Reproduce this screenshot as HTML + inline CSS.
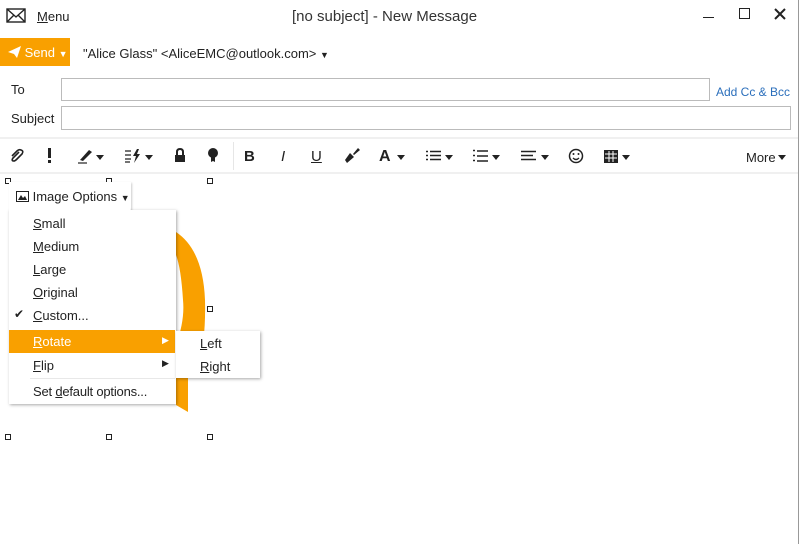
<!DOCTYPE html>
<html><head><style>
*{margin:0;padding:0;box-sizing:border-box}
body{width:800px;height:544px;background:#fff;font-family:"Liberation Sans",sans-serif;color:#222;position:relative;overflow:hidden;font-size:13px}
.a{position:absolute}
.u{text-decoration:underline}
.mi{position:absolute;left:33px;font-size:13px;color:#222}
.h{position:absolute;width:6px;height:6px;border:1px solid #222;background:#fff}
.tb{position:absolute;top:148px;font-size:15px;color:#222}
.ar{position:absolute;top:155px;width:0;height:0;border-left:4px solid transparent;border-right:4px solid transparent;border-top:5px solid #222}
</style></head><body>
<div class="a" style="right:1px;top:0;width:1px;height:544px;background:#999"></div>
<svg class="a" style="left:6px;top:8px" width="20" height="16"><rect x="1" y="1" width="18" height="13" fill="none" stroke="#222" stroke-width="1.4"/><path d="M1 1L10 9L19 1M1 14L8 7M19 14L12 7" fill="none" stroke="#222" stroke-width="1.4"/></svg>
<div class="a" style="left:37px;top:9px;font-size:13px"><span class="u">M</span>enu</div>
<div class="a" style="left:292px;top:8px;font-size:15px;color:#333">[no subject] - New Message</div>
<div class="a" style="left:703px;top:17px;width:11px;height:1px;background:#222"></div>
<div class="a" style="left:739px;top:8px;width:11px;height:11px;border:1.5px solid #222"></div>
<svg class="a" style="left:774px;top:8px" width="12" height="12"><path d="M1 1L11 11M11 1L1 11" stroke="#222" stroke-width="2"/></svg>
<div class="a" style="left:0;top:38px;width:70px;height:28px;background:#f9a000;color:#fff;font-size:13px;padding:7px 0 0 8px">
<svg width="13" height="12" style="vertical-align:-1px"><path d="M0 6L13 0L9 12L6 8Z" fill="#fff"/></svg> Send <span style="font-size:9px">▼</span></div>
<div class="a" style="left:83px;top:46px;font-size:13px">"Alice Glass" &lt;AliceEMC@outlook.com&gt; <span style="font-size:9px">▼</span></div>
<div class="a" style="left:11px;top:82px;font-size:13px">To</div>
<div class="a" style="left:61px;top:78px;width:649px;height:23px;border:1px solid #bbb"></div>
<div class="a" style="left:716px;top:85px;font-size:12px;color:#2a6ebb">Add Cc &amp; Bcc</div>
<div class="a" style="left:11px;top:111px;font-size:13px">Subject</div>
<div class="a" style="left:61px;top:106px;width:730px;height:24px;border:1px solid #bbb"></div>
<div class="a" style="left:0;top:137px;width:798px;height:2px;background:#f0f0f0"></div>
<div class="a" style="left:0;top:172px;width:798px;height:2px;background:#f0f0f0"></div>
<div class="a" style="left:233px;top:142px;width:1px;height:28px;background:#e6e6e6"></div>
<svg class="a" style="left:9px;top:148px" width="16" height="16"><path d="M10 4L4 10Q2 13 5 13Q6 13 8 11L13 6Q15 3 12 2Q10 1 8 3L3 8" fill="none" stroke="#222" stroke-width="1.6"/></svg>
<div class="a" style="left:48px;top:148px;width:3px;height:10px;background:#222"></div>
<div class="a" style="left:48px;top:160px;width:3px;height:3px;background:#222"></div>
<svg class="a" style="left:77px;top:147px" width="18" height="18"><path d="M3 13L12 3L15 5L6 14Z" fill="#222"/><path d="M1 16H10" stroke="#222" stroke-width="1.2"/></svg>
<div class="ar" style="left:96px"></div>
<svg class="a" style="left:124px;top:148px" width="18" height="16"><path d="M1 3H7M1 7H7M1 11H7M1 14H6" stroke="#222" stroke-width="1.3"/><path d="M13 1L9 8H12L10 15L16 6H13L15 1Z" fill="#222"/></svg>
<div class="ar" style="left:145px"></div>
<svg class="a" style="left:174px;top:148px" width="12" height="15"><path d="M3 7V4Q3 1 6 1Q9 1 9 4V7" fill="none" stroke="#222" stroke-width="2"/><rect x="1" y="7" width="10" height="7" fill="#222"/></svg>
<svg class="a" style="left:207px;top:148px" width="12" height="16"><circle cx="6" cy="5" r="5" fill="#222"/><path d="M4 9H8V14L6 13L4 14Z" fill="#222"/></svg>
<div class="tb" style="left:244px;font-weight:bold">B</div>
<div class="tb" style="left:281px;font-style:italic">I</div>
<div class="tb" style="left:311px;text-decoration:underline">U</div>
<svg class="a" style="left:343px;top:147px" width="17" height="17"><path d="M10 7L15 1L17 3L11 8Z" fill="#222"/><path d="M2 13L7 6L11 10L4 16Z" fill="#222"/></svg>
<div class="tb" style="left:379px;font-weight:bold;font-size:16px">A</div>
<div class="ar" style="left:397px"></div>
<svg class="a" style="left:426px;top:150px" width="16" height="12"><path d="M0 1.5H2M4 1.5H15M0 5.5H2M4 5.5H15M0 9.5H2M4 9.5H15" stroke="#222" stroke-width="1.6"/></svg>
<div class="ar" style="left:445px"></div>
<svg class="a" style="left:473px;top:149px" width="16" height="14"><path d="M0 1.5H2M4 2H15M0 6.5H2M4 7H15M0 11.5H2M4 12H15" stroke="#222" stroke-width="1.6"/></svg>
<div class="ar" style="left:492px"></div>
<svg class="a" style="left:521px;top:150px" width="16" height="12"><path d="M0 1.5H15M0 5.5H12M0 9.5H15" stroke="#222" stroke-width="1.6"/></svg>
<div class="ar" style="left:541px"></div>
<svg class="a" style="left:568px;top:148px" width="16" height="16"><circle cx="8" cy="8" r="6.5" fill="none" stroke="#222" stroke-width="1.5"/><circle cx="5.5" cy="6" r="1" fill="#222"/><circle cx="10.5" cy="6" r="1" fill="#222"/><path d="M5 10Q8 13 11 10" fill="none" stroke="#222" stroke-width="1.3"/></svg>
<svg class="a" style="left:604px;top:150px" width="14" height="13"><rect x="0" y="0" width="14" height="13" fill="#222"/><path d="M1 4H13M1 8H13M5 1V12M9 1V12" stroke="#fff" stroke-width="1"/></svg>
<div class="ar" style="left:622px"></div>
<div class="a" style="left:746px;top:150px;font-size:13px">More</div>
<div class="ar" style="left:778px;top:155px"></div>
<svg class="a" style="left:0;top:0" width="800" height="544"><path d="M176 232Q203 250 205 300Q206 340 198 370L176 370L176 345Q185 320 183 300Q181 268 176 255Z" fill="#f9a000"/><path d="M176 378L188 378L188 412L176 405Z" fill="#f9a000"/></svg>
<div class="h" style="left:5px;top:178px"></div><div class="h" style="left:106px;top:178px"></div><div class="h" style="left:207px;top:178px"></div>
<div class="h" style="left:207px;top:306px"></div>
<div class="h" style="left:5px;top:434px"></div><div class="h" style="left:106px;top:434px"></div><div class="h" style="left:207px;top:434px"></div>
<div class="a" style="left:9px;top:182px;width:122px;height:30px;background:#fff;box-shadow:1px 1px 2px rgba(0,0,0,.2)"></div>
<div class="a" style="left:9px;top:210px;width:167px;height:194px;background:#fff;box-shadow:1px 1px 3px rgba(0,0,0,.35)"></div>
<div class="a" style="left:9px;top:182px;width:121px;height:30px;background:#fff"></div>
<div class="a" style="left:16px;top:189px;font-size:13px"><svg width="13" height="11" style="vertical-align:-1px"><rect x=".5" y=".5" width="12" height="10" fill="none" stroke="#222"/><path d="M2 9L5 4L7 7L9 5L11 9Z" fill="#222"/></svg> Image Options <span style="font-size:9px">▼</span></div>
<div class="mi" style="top:216px"><span class="u">S</span>mall</div>
<div class="mi" style="top:239px"><span class="u">M</span>edium</div>
<div class="mi" style="top:262px"><span class="u">L</span>arge</div>
<div class="mi" style="top:285px"><span class="u">O</span>riginal</div>
<div class="a" style="left:14px;top:307px;font-size:12px">✔</div>
<div class="mi" style="top:308px"><span class="u">C</span>ustom...</div>
<div class="a" style="left:9px;top:330px;width:166px;height:23px;background:#f9a000"></div>
<div class="mi" style="top:334px;color:#fff"><span class="u">R</span>otate</div>
<div class="a" style="left:162px;top:335px;font-size:9px;color:#fff">▶</div>
<div class="mi" style="top:358px"><span class="u">F</span>lip</div>
<div class="a" style="left:162px;top:358px;font-size:9px">▶</div>
<div class="a" style="left:30px;top:378px;width:145px;height:1px;background:#e8e8e8"></div>
<div class="mi" style="top:384px;letter-spacing:-0.2px">Set <span class="u">d</span>efault options...</div>
<div class="a" style="left:176px;top:331px;width:84px;height:47px;background:#fff;box-shadow:1px 1px 3px rgba(0,0,0,.35)"></div>
<div class="a" style="left:200px;top:336px;font-size:13px"><span class="u">L</span>eft</div>
<div class="a" style="left:200px;top:359px;font-size:13px"><span class="u">R</span>ight</div>
</body></html>
